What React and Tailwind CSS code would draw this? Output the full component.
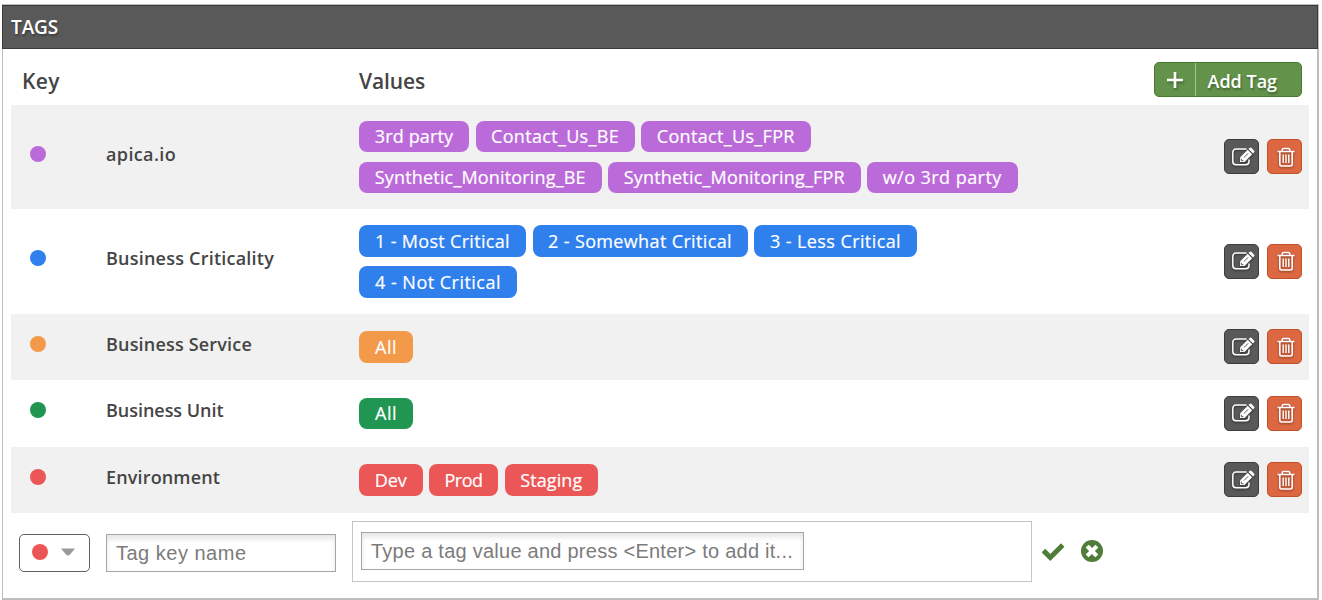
const FONT = "font-['Open_Sans','Noto_Sans',sans-serif]";

const ROWS = [
  {
    key: "apica.io",
    keyStyle: "tracking-[0.38px]",
    color: "bg-[#bb6bd9]",
    height: "h-[104.5px]",
    values: [
      ["3rd party", "w-[110px] tracking-[0.15px]"],
      ["Contact_Us_BE", "w-[159px] tracking-[0.32px]"],
      ["Contact_Us_FPR", "w-[169.5px] tracking-[0.33px]"],
      ["Synthetic_Monitoring_BE", "w-[242.5px] tracking-[0.17px]"],
      ["Synthetic_Monitoring_FPR", "w-[252.5px] tracking-[0.18px]"],
      ["w/o 3rd party", "w-[150.5px] tracking-[0.45px]"],
    ],
  },
  {
    key: "Business Criticality",
    keyStyle: "tracking-[0.22px]",
    color: "bg-[#2f80ed]",
    height: "h-[104.5px]",
    values: [
      ["1 - Most Critical", "w-[167px] tracking-[0.32px]"],
      ["2 - Somewhat Critical", "w-[215px] tracking-[0.36px]"],
      ["3 - Less Critical", "w-[163px] tracking-[0.41px]"],
      ["4 - Not Critical", "w-[158px] tracking-[0.48px]"],
    ],
  },
  {
    key: "Business Service",
    keyStyle: "tracking-[0.18px]",
    color: "bg-[#f2994a]",
    height: "h-[66.5px]",
    values: [["All", "w-[54px] tracking-[0.5px]"]],
  },
  {
    key: "Business Unit",
    keyStyle: "tracking-[-0.04px]",
    color: "bg-[#219653]",
    height: "h-[66.5px]",
    values: [["All", "w-[54px] tracking-[0.5px]"]],
  },
  {
    key: "Environment",
    keyStyle: "tracking-[0.15px]",
    color: "bg-[#eb5757]",
    height: "h-[66.5px]",
    values: [
      ["Dev", "w-[63.5px]"],
      ["Prod", "w-[69px] tracking-[-0.5px]"],
      ["Staging", "w-[93.5px] tracking-[0.09px]"],
    ],
  },
];

function EditIcon() {
  return (
    <svg viewBox="0 0 24 20" className="h-5 w-6 drop-shadow-[0_1px_1px_rgba(0,0,0,0.5)]" fill="none">
      <path d="M15 2H5a3.2 3.2 0 0 0-3.2 3.2v9.3A3.2 3.2 0 0 0 5 17.700h9.800a3.200 3.200 0 0 0 3.200-3.200v-1.500" stroke="#fff" strokeWidth="1.5" strokeLinecap="round" />
      <path d="M9 15v-4.500l7.700-7.700 4.500 4.500L13.500 15z" fill="#fff" />
      <path d="m17.500 2 1-1a1.500 1.500 0 0 1 2.100 0l2.400 2.400a1.500 1.500 0 0 1 0 2.100l-1 1z" fill="#fff" />
      <path d="M10.300 11.600v2.100h2.100M13 10.500l4.200-4.200" stroke="#555" strokeWidth="1" />
    </svg>
  );
}

function TrashIcon() {
  return (
    <svg viewBox="0 0 20 22" className="h-[22px] w-5 drop-shadow-[0_1px_1px_rgba(0,0,0,0.4)]" fill="none" stroke="#fff">
      <path d="M1.500 5.500h17M3.800 5.500v12.500c0 1.100.7 2 1.700 2h9c1 0 1.700-.9 1.700-2V5.500M6.200 5.300V4c0-.9.6-1.500 1.400-1.500h4.800c.8 0 1.400.6 1.400 1.500v1.300" strokeWidth="1.600" />
      <path d="M7.200 8.500v8.500M10 8.500v8.500M12.800 8.500v8.500" strokeWidth="1.400" />
    </svg>
  );
}

function TagRow({ row, striped }) {
  return (
    <div className={`flex ${row.height} ${striped ? "bg-[#f1f1f1]" : "bg-white"}`}>
      <div className="flex w-[95px] items-center pb-[6px] pl-[19px]">
        <span className={`size-4 rounded-full ${row.color}`} />
      </div>
      <div className="flex w-[253px] items-center pb-[6px]">
        <span className={`text-[18px] leading-6 font-semibold whitespace-nowrap text-[#454545] ${row.keyStyle}`}>{row.key}</span>
      </div>
      <div className="flex w-[680px] flex-wrap content-center gap-x-[6.5px] gap-y-[9.5px]">
        {row.values.map(([label, style]) => (
          <span key={label} className={`flex h-[31.5px] items-center justify-center rounded-lg text-[18px] leading-6 whitespace-nowrap text-white [-webkit-text-stroke:0.2px_white] ${row.color} ${style}`}>
            {label}
          </span>
        ))}
      </div>
      <div className="ml-auto flex items-center gap-2 pr-[7.5px]">
        <button className="flex size-[35px] items-center justify-center rounded-[5px] border border-[#3c3c3c] bg-[#595959] pl-[3px]">
          <EditIcon />
        </button>
        <button className="flex size-[35px] items-center justify-center rounded-[5px] border border-[#c2512a] bg-[#dc6740] pl-[3px]">
          <TrashIcon />
        </button>
      </div>
    </div>
  );
}

export default function App() {
  return (
    <div className={`h-[600px] overflow-hidden bg-white pt-1 pr-[3px] pl-[2px] ${FONT}`}>
      <div className="h-[596px] border-t border-r-2 border-b-2 border-l border-[#bdbdbd]">
        <header className="-mr-px -ml-px flex h-11 items-center border border-[#3b3b3b] bg-[#595959] pl-2">
          <h1 className="text-[19px] leading-6 font-semibold tracking-[-0.1px] text-white [text-shadow:1px_2px_2px_rgba(0,0,0,0.3)]">TAGS</h1>
        </header>
        <div className="px-2">
          <div className="flex h-[55.5px] pt-[13px] text-[#454545]">
            <h2 className="mt-[5px] w-[337px] pl-[11px] text-[21px] leading-7 font-semibold tracking-[0.4px]">Key</h2>
            <h2 className="mt-[5px] pl-[11px] text-[21px] leading-7 font-semibold tracking-[-0.1px]">Values</h2>
            <button className="mr-[7.5px] ml-auto flex h-[35px] w-[148px] rounded-[5px] border border-[#477a2f] bg-[#63924b] text-white [text-shadow:1px_2px_2px_rgba(0,0,0,0.3)]">
              <span className="flex h-full w-[41px] items-center justify-center border-r border-[#a5c497]">
                <svg viewBox="0 0 16 16" className="size-4 drop-shadow-[1px_2px_1px_rgba(0,0,0,0.3)]">
                  <path d="M8 0v16M0 8h16" stroke="#fff" strokeWidth="2.600" />
                </svg>
              </span>
              <span className="pt-[6px] pl-3 text-[18px] leading-6 font-semibold">Add Tag</span>
            </button>
          </div>
          {ROWS.map((row, i) => (
            <TagRow key={row.key} row={row} striped={i % 2 === 0} />
          ))}
          <div className="flex items-start pt-[8px] pl-2 font-['Liberation_Sans',Arial,sans-serif] text-[20px] text-[#7b7b7b]">
            <button className="mt-[13px] flex h-[38px] w-[71px] items-center rounded-[5px] border-[1.5px] border-[#606060] bg-white pb-[3px] pl-[12px]">
              <span className="size-4 rounded-full bg-[#eb5757]" />
              <svg viewBox="0 0 14 8" className="ml-[13px] h-2 w-[14px]">
                <path d="M0 .5h14L9 6.500Q7 8.500 5 6.500z" fill="#999" />
              </svg>
            </button>
            <div className="mt-[13px] ml-4 flex h-[38px] w-[230px] items-center border-[1.5px] border-[#a6a6a6] pl-[9px] leading-6 tracking-[0.5px] shadow-[inset_0_4px_5px_rgba(0,0,0,0.1)]">
              Tag key name
            </div>
            <div className="ml-4 h-[61px] w-[680px] border border-[#c4c4c4] pt-[10px] pl-2">
              <div className="flex h-[38px] w-[443px] items-center border-[1.5px] border-[#a6a6a6] pl-[9px] leading-6 whitespace-nowrap tracking-[0.25px] shadow-[inset_0_4px_5px_rgba(0,0,0,0.1)]">
                Type a tag value and press &lt;Enter&gt; to add it...
              </div>
            </div>
            <svg viewBox="0 0 22 18" className="mt-[22px] ml-[10px] h-[18px] w-[22px]">
              <path d="m3.200 9.300 5.100 5.100L19 3.700" fill="none" stroke="#4f7d39" strokeWidth="5" strokeLinejoin="miter" strokeLinecap="square" />
            </svg>
            <svg viewBox="0 0 22 22" className="mt-[19px] ml-[17px] size-[22px]">
              <circle cx="11" cy="11" r="11" fill="#4f7d39" />
              <path d="m7.600 7.600 6.800 6.800M14.400 7.600l-6.800 6.800" stroke="#fff" strokeWidth="4.200" strokeLinecap="square" strokeLinejoin="round" />
            </svg>
          </div>
        </div>
      </div>
    </div>
  );
}
